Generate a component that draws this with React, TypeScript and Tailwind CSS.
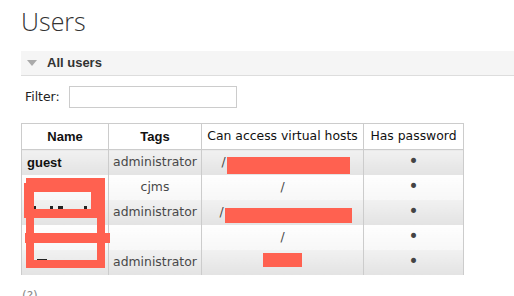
import React from "react";

const RED = "bg-[#ff6150]";

export default function App() {
  const odd = "bg-gradient-to-b from-[#f1f1f1] to-[#e3e3e3]";
  const even = "bg-gradient-to-b from-[#fefefe] to-[#f7f7f7]";
  const td = "h-[25px] p-0 border-x border-[#cccccc] text-center align-middle";
  const rows = [
    { bg: odd, name: "guest", tags: "administrator", vhost: "red1" },
    { bg: even, name: "", tags: "cjms", vhost: "/" },
    { bg: odd, name: "", tags: "administrator", vhost: "red2" },
    { bg: even, name: "", tags: "", vhost: "/" },
    { bg: odd, name: "", tags: "administrator", vhost: "red3" },
  ];
  return (
    <div className="relative w-[514px] h-[296px] overflow-hidden bg-white pl-[21px] font-['DejaVu_Sans',sans-serif] text-[12.4px] text-[#484848]">
      <h1 className="pt-[9px] h-[34px] text-[25px] leading-[25px] font-light font-['Open_Sans',sans-serif] text-[#333333]">
        Users
      </h1>

      <div className="mt-[17px] h-[25px] bg-[#f5f5f5] border-b border-[#dddddd] flex items-center pl-[6px]">
        <svg width="10" height="6" viewBox="0 0 10 6" className="block">
          <path d="M0 0 L10 0 L5 6 Z" fill="#aaaaaa" />
        </svg>
        <span className="ml-[10px] font-['Liberation_Sans',sans-serif] font-bold text-[13px] text-[#333333]">
          All users
        </span>
      </div>

      <div className="mt-[10px] flex items-center">
        <span className="ml-[4px] text-[12.4px] text-[#222222]">Filter:</span>
        <div className="ml-[9px] w-[168px] h-[22px] border border-[#cccccc] bg-white" />
      </div>

      <table className="mt-[15px] border-collapse table-fixed w-[442px]">
        <colgroup>
          <col className="w-[87px]" />
          <col className="w-[93px]" />
          <col className="w-[162px]" />
          <col className="w-[100px]" />
        </colgroup>
        <thead>
          <tr className="h-[26px] bg-white">
            <th className="border border-[#cccccc] p-0 font-['Liberation_Sans',sans-serif] font-bold text-[13px] text-[#111111]">
              Name
            </th>
            <th className="border border-[#cccccc] p-0 font-['Liberation_Sans',sans-serif] font-bold text-[13px] text-[#111111]">
              Tags
            </th>
            <th className="border border-[#cccccc] p-0 font-normal text-[#111111]">
              Can access virtual hosts
            </th>
            <th className="border border-[#cccccc] p-0 font-normal text-[#111111]">
              Has password
            </th>
          </tr>
        </thead>
        <tbody>
          {rows.map((r, i) => (
            <tr key={i}>
              <td className={`${td} ${r.bg} text-left pl-[5px] font-['Liberation_Sans',sans-serif] font-bold text-[13px] text-[#111111]`}>
                {r.name}
              </td>
              <td className={`${td} ${r.bg}`}>{r.tags}</td>
              <td className={`${td} ${r.bg} ${r.vhost === "red3" ? "" : r.vhost === "/" ? "" : "pl-[6px]"}`}>
                {r.vhost === "/" && "/"}
                {r.vhost === "red1" && (
                  <span className="inline-flex items-center">
                    <span>/</span>
                    <span className={`inline-block w-[123px] h-[17px] ${RED} relative top-[3px] ml-[1px]`} />
                  </span>
                )}
                {r.vhost === "red2" && (
                  <span className="inline-flex items-center">
                    <span>/</span>
                    <span className={`inline-block w-[127px] h-[15px] ${RED} relative top-[4px] ml-[1px]`} />
                  </span>
                )}
                {r.vhost === "red3" && (
                  <span className={`inline-block w-[39px] h-[14px] ${RED} relative top-[1px]`} />
                )}
              </td>
              <td className={`${td} ${r.bg} text-[#444444]`}>
                <span className="text-[17px] leading-none relative top-[1px]">•</span>
              </td>
            </tr>
          ))}
        </tbody>
      </table>

      <div className="mt-[12px] pl-[1px] text-[12px] text-[#888888]">(?)</div>

      {/* redaction scribble over the Name column */}
      <svg
        className="absolute left-0 top-0 pointer-events-none"
        width="514"
        height="296"
        viewBox="0 0 514 296"
      >
        <g fill="#222222">
          <rect x="51" y="187" width="3" height="4" />
          <rect x="33" y="206" width="3" height="3" />
          <rect x="50" y="206" width="3" height="3" />
          <rect x="58" y="206" width="5" height="3" />
          <rect x="84" y="206" width="3" height="3" />
          <rect x="37" y="259" width="10" height="2" />
        </g>
        <g fill="#ff6150">
          <rect x="26" y="178" width="79" height="14" />
          <rect x="24" y="183" width="10" height="35" />
          <rect x="26" y="178" width="8" height="90" />
          <rect x="91" y="178" width="14" height="31" />
          <rect x="97" y="178" width="8" height="90" />
          <rect x="25" y="209" width="72" height="9" />
          <rect x="25" y="233" width="85" height="10" />
          <rect x="26" y="260" width="79" height="8" />
        </g>
      </svg>
    </div>
  );
}
